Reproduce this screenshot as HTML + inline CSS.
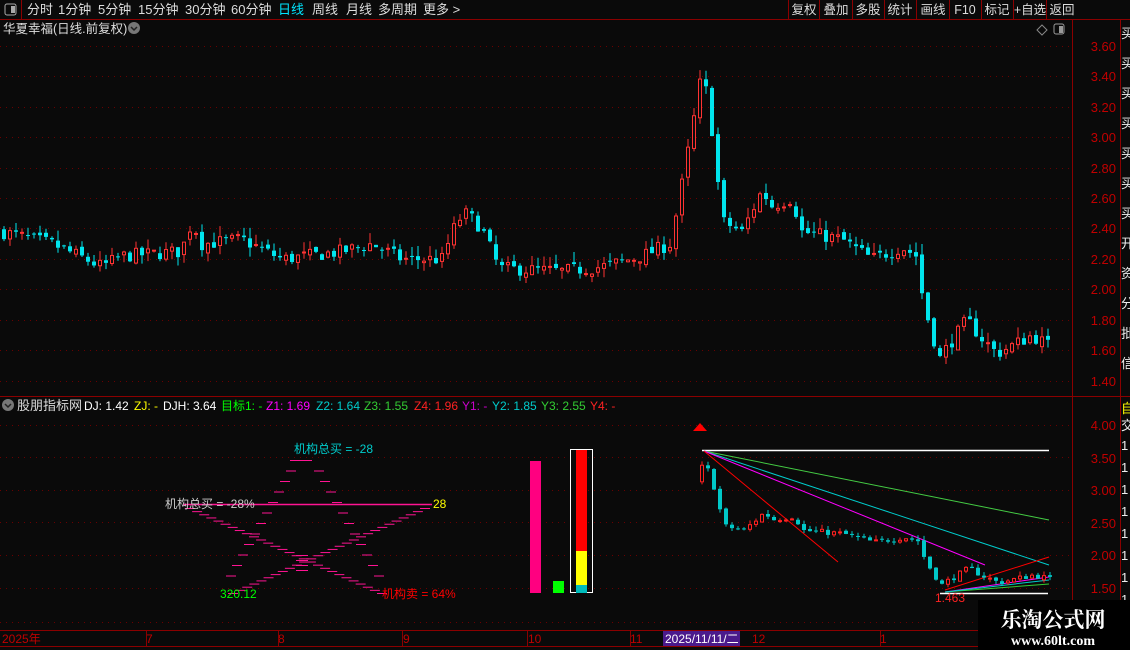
<!DOCTYPE html>
<html><head><meta charset="utf-8">
<style>
body{margin:0;background:#0a0a0a;width:1130px;height:650px;overflow:hidden;font-family:"Liberation Sans","Noto Sans CJK SC",sans-serif;}
svg{position:absolute;left:0;top:0}
</style></head><body>
<svg id="s" width="1130" height="650" xmlns="http://www.w3.org/2000/svg" font-family="Liberation Sans, Noto Sans CJK SC, sans-serif">
<rect width="1130" height="650" fill="#0a0a0a"/>
<line x1="0" y1="19.5" x2="1130" y2="19.5" stroke="#8b0000"/>
<line x1="21.5" y1="0" x2="21.5" y2="19" stroke="#8b0000"/>
<rect x="5" y="4" width="11" height="11" rx="2" fill="none" stroke="#aaa"/><rect x="11" y="6" width="4" height="7" fill="#aaa"/>
<g font-size="13" fill="#ddd">
<text x="27" y="14">分时</text><text x="58" y="14">1分钟</text><text x="98" y="14">5分钟</text><text x="138" y="14">15分钟</text><text x="185" y="14">30分钟</text><text x="231" y="14">60分钟</text>
<text x="278" y="14" fill="#00e5ff">日线</text><text x="312" y="14">周线</text><text x="346" y="14">月线</text><text x="378" y="14">多周期</text><text x="423" y="14">更多 &gt;</text>
</g>
<g font-size="12.5" fill="#ddd" text-anchor="middle">
<text x="804" y="14">复权</text><text x="836" y="14">叠加</text><text x="868" y="14">多股</text><text x="900" y="14">统计</text><text x="933" y="14">画线</text><text x="965" y="14">F10</text><text x="997" y="14">标记</text><text x="1030" y="14">+自选</text><text x="1062" y="14">返回</text>
</g>
<g stroke="#8b0000"><line x1="788.5" y1="0" x2="788.5" y2="19"/><line x1="819.5" y1="0" x2="819.5" y2="19"/><line x1="852.5" y1="0" x2="852.5" y2="19"/><line x1="884.5" y1="0" x2="884.5" y2="19"/><line x1="916.5" y1="0" x2="916.5" y2="19"/><line x1="949.5" y1="0" x2="949.5" y2="19"/><line x1="981.5" y1="0" x2="981.5" y2="19"/><line x1="1013.5" y1="0" x2="1013.5" y2="19"/><line x1="1046.5" y1="0" x2="1046.5" y2="19"/></g>
<text x="3" y="33" font-size="12.5" fill="#ddd">华夏幸福(日线.前复权)</text>
<circle cx="134" cy="28" r="6" fill="#777"/><path d="M131 27l3 3 3-3" stroke="#222" stroke-width="1.5" fill="none"/>
<path d="M1042 25l5 5-5 5-5-5z" fill="none" stroke="#888"/>
<rect x="1054" y="24" width="10" height="10" rx="2" fill="none" stroke="#999"/><rect x="1059" y="26" width="4" height="7" fill="#999"/>
<line x1="1072.5" y1="20" x2="1072.5" y2="630" stroke="#8b0000"/>
<line x1="1120.5" y1="20" x2="1120.5" y2="630" stroke="#8b0000"/>
<line x1="0" y1="396.5" x2="1130" y2="396.5" stroke="#8b0000"/>
<line x1="0" y1="630.5" x2="1130" y2="630.5" stroke="#8b0000"/>
<line x1="0" y1="646.5" x2="1130" y2="646.5" stroke="#8b0000"/>
<g id="grid"></g>
<g id="cand"></g>
<g font-size="13" fill="#c00000" text-anchor="end">
<text x="1116" y="51">3.60</text><text x="1116" y="81">3.40</text><text x="1116" y="112">3.20</text><text x="1116" y="142">3.00</text><text x="1116" y="173">2.80</text><text x="1116" y="203">2.60</text><text x="1116" y="233">2.40</text><text x="1116" y="264">2.20</text><text x="1116" y="294">2.00</text><text x="1116" y="325">1.80</text><text x="1116" y="355">1.60</text><text x="1116" y="386">1.40</text>
<text x="1116" y="430">4.00</text><text x="1116" y="463">3.50</text><text x="1116" y="495">3.00</text><text x="1116" y="528">2.50</text><text x="1116" y="560">2.00</text><text x="1116" y="593">1.50</text>
</g>
<g font-size="13" fill="#eee"><text x="1121" y="38">买</text><text x="1121" y="68">买</text><text x="1121" y="98">买</text><text x="1121" y="128">买</text><text x="1121" y="158">买</text><text x="1121" y="188">买</text><text x="1121" y="218">买</text><text x="1121" y="248">开</text><text x="1121" y="278">资</text><text x="1121" y="308">分</text><text x="1121" y="338">批</text><text x="1121" y="368">信</text><text x="1121" y="413" fill="#ff0">自</text><text x="1121" y="430">交</text>
<text x="1121" y="450">1</text><text x="1121" y="472">1</text><text x="1121" y="494">1</text><text x="1121" y="516">1</text><text x="1121" y="538">1</text><text x="1121" y="560">1</text><text x="1121" y="582">1</text><text x="1121" y="604">1</text></g>
<circle cx="8" cy="405" r="6" fill="#777"/><path d="M5 404l3 3 3-3" stroke="#222" stroke-width="1.5" fill="none"/>
<text y="410" font-size="12"><tspan x="17" fill="#ddd" font-size="13">股朋指标网</tspan><tspan x="84" fill="#fff">DJ: 1.42</tspan><tspan x="134" fill="#ff0">ZJ: -</tspan><tspan x="163" fill="#fff">DJH: 3.64</tspan><tspan x="221" fill="#0f0">目标1: -</tspan><tspan x="266" fill="#f0f">Z1: 1.69</tspan><tspan x="316" fill="#0cc">Z2: 1.64</tspan><tspan x="364" fill="#3c3">Z3: 1.55</tspan><tspan x="414" fill="#f22">Z4: 1.96</tspan><tspan x="462" fill="#c0c">Y1: -</tspan><tspan x="492" fill="#0cc">Y2: 1.85</tspan><tspan x="541" fill="#3c3">Y3: 2.55</tspan><tspan x="590" fill="#f22">Y4: -</tspan></text>
<g id="star"></g>
<line x1="183" y1="504.5" x2="432" y2="504.5" stroke="#ff1493" stroke-width="1.5"/>
<text x="294" y="453" font-size="12" fill="#0cc">机构总买 = -28</text>
<text x="165" y="508" font-size="12" fill="#ccc">机构总买 = -28%</text>
<text x="433" y="508" font-size="12" fill="#ff0">28</text>
<text x="220" y="598" font-size="12" fill="#0f0">320.12</text>
<text x="382" y="598" font-size="12" fill="#f00">机构卖 = 64%</text>
<rect x="530" y="461" width="11" height="132" fill="#ff0080"/>
<rect x="553" y="581" width="11" height="12" fill="#0f0"/>
<rect x="570.5" y="449.5" width="22" height="143" fill="none" stroke="#fff"/>
<rect x="576" y="450" width="11" height="101" fill="#f00"/><rect x="576" y="551" width="11" height="34" fill="#ff0"/><rect x="576" y="585" width="11" height="8" fill="#0bb"/>
<path d="M693 431l7-8 7 8z" fill="#f00"/>
<line x1="702" y1="450.5" x2="1049" y2="450.5" stroke="#fff" stroke-width="1.5"/>
<line x1="704" y1="451" x2="1049" y2="520" stroke="#4c4"/>
<line x1="704" y1="451" x2="1049" y2="565" stroke="#0cc"/>
<line x1="704" y1="451" x2="985" y2="565" stroke="#f0f"/>
<line x1="704" y1="451" x2="838" y2="562" stroke="#f00"/>
<line x1="940" y1="593.5" x2="1048" y2="593.5" stroke="#fff" stroke-width="1.5"/>
<line x1="945" y1="590" x2="1049" y2="557" stroke="#f00"/>
<line x1="945" y1="592" x2="1049" y2="577" stroke="#f0f"/>
<line x1="945" y1="592" x2="1049" y2="584" stroke="#3c3"/>
<line x1="945" y1="592" x2="1049" y2="580" stroke="#0cc"/>
<g id="cand2"></g>
<text x="935" y="602" font-size="12" fill="#f22">1.463</text>
<g font-size="12" fill="#c00000"><text x="2" y="643">2025年</text><text x="146" y="643">7</text><text x="278" y="643">8</text><text x="403" y="643">9</text><text x="528" y="643">10</text><text x="630" y="643">11</text><text x="752" y="643">12</text><text x="880" y="643">1</text></g>
<rect x="663" y="631" width="77" height="15" fill="#4b1a8c"/>
<text x="665" y="643" font-size="12" fill="#fff">2025/11/11/二</text>
<g stroke="#8b0000"><line x1="146.5" y1="631" x2="146.5" y2="646"/><line x1="278.5" y1="631" x2="278.5" y2="646"/><line x1="402.5" y1="631" x2="402.5" y2="646"/><line x1="527.5" y1="631" x2="527.5" y2="646"/><line x1="630.5" y1="631" x2="630.5" y2="646"/><line x1="880.5" y1="631" x2="880.5" y2="646"/></g>
<rect x="978" y="600" width="152" height="50" fill="#000"/>
<text x="1053" y="627" font-size="21" font-weight="bold" fill="#fff" text-anchor="middle" font-family="Noto Serif CJK SC, serif">乐淘公式网</text>
<text x="1053" y="645" font-size="14" font-weight="bold" fill="#fff" text-anchor="middle" font-family="Liberation Serif, serif">www.60lt.com</text>
</svg>
<script>
var NS="http://www.w3.org/2000/svg";
function el(p,t,a){var e=document.createElementNS(NS,t);for(var k in a)e.setAttribute(k,a[k]);p.appendChild(e);return e;}
var g=document.getElementById('grid');
[46,76,107,137,168,198,228,259,289,320,350,381,425,457,490,522,555,588,622].forEach(function(y){el(g,'line',{x1:0,x2:1070,y1:y+.5,y2:y+.5,stroke:'#6a0000','stroke-dasharray':'1 5'});});
var seed=7;function r(){seed=(seed*16807)%2147483647;return seed/2147483647;}
var K=[[0,2.38],[50,2.30],[100,2.15],[120,2.22],[180,2.25],[186,2.40],[192,2.42],[200,2.30],[240,2.33],[280,2.20],[340,2.25],[370,2.30],[400,2.20],[440,2.20],[455,2.45],[465,2.50],[480,2.40],[497,2.14],[560,2.12],[600,2.15],[640,2.22],[668,2.30],[676,2.55],[690,3.05],[698,3.35],[705,3.3],[712,2.95],[720,2.45],[740,2.38],[760,2.65],[770,2.55],[790,2.60],[800,2.38],[840,2.33],[870,2.20],[900,2.28],[915,2.22],[920,1.98],[928,1.75],[938,1.55],[945,1.62],[965,1.80],[980,1.68],[995,1.58],[1030,1.70],[1050,1.62]];
function P(x){for(var i=0;i<K.length-1;i++){if(x<=K[i+1][0]){var t=(x-K[i][0])/(K[i+1][0]-K[i][0]);return K[i][1]+t*(K[i+1][1]-K[i][1]);}}return K[K.length-1][1];}
function Y(p){return 46+(3.6-p)*152.3;}
function Y2(p){return 425+(4-p)*65.2;}
var c=document.getElementById('cand'),c2=document.getElementById('cand2');
var prev=P(0);
for(var x=2;x<=1048;x+=6){
 var p=P(x)+(r()-.5)*0.09;var o=prev+(r()-.5)*0.04,cl=p;
 var hi=Math.max(o,cl)+r()*0.07,lo=Math.min(o,cl)-r()*0.06;
 var up=cl>=o,col=up?'#ff3333':'#00e5ee';
 draw(c,x,o,cl,hi,lo,col,up,Y);
 if(x>=698){var xx=700+(x-698)*1.0;draw(c2,xx,o,cl,hi,lo,up?'#ff2020':'#00c8c8',up,Y2);}
 prev=cl;
}
function draw(par,x,o,cl,hi,lo,col,up,F){
 el(par,'line',{x1:x+2,x2:x+2,y1:F(hi),y2:F(lo),stroke:col});
 var t=F(Math.max(o,cl)),b=F(Math.min(o,cl));if(b-t<1)b=t+1;
 if(up)el(par,'rect',{x:x+.5,y:t,width:3,height:b-t,fill:'#0a0a0a',stroke:col});
 else el(par,'rect',{x:x,y:t,width:4,height:b-t,fill:col});
}
var s=document.getElementById('star');
function d(x,y,w){el(s,'line',{x1:x,x2:x+w,y1:y+.5,y2:y+.5,stroke:'#ff1493','stroke-width':1});}
for(var i=0;i<28;i++){var t=i/27;var y=508+t*85;d(185+t*192,y,10);d(420-t*192,y,10);}
d(290,460,22);
for(var j=1;j<12;j++){var y=460+j*10.5;d(292-j*6,y,10);d(308+j*6,y,10);}
for(var j=0;j<4;j++){d(296,555+j*5,12);}
</script>
</body></html>
